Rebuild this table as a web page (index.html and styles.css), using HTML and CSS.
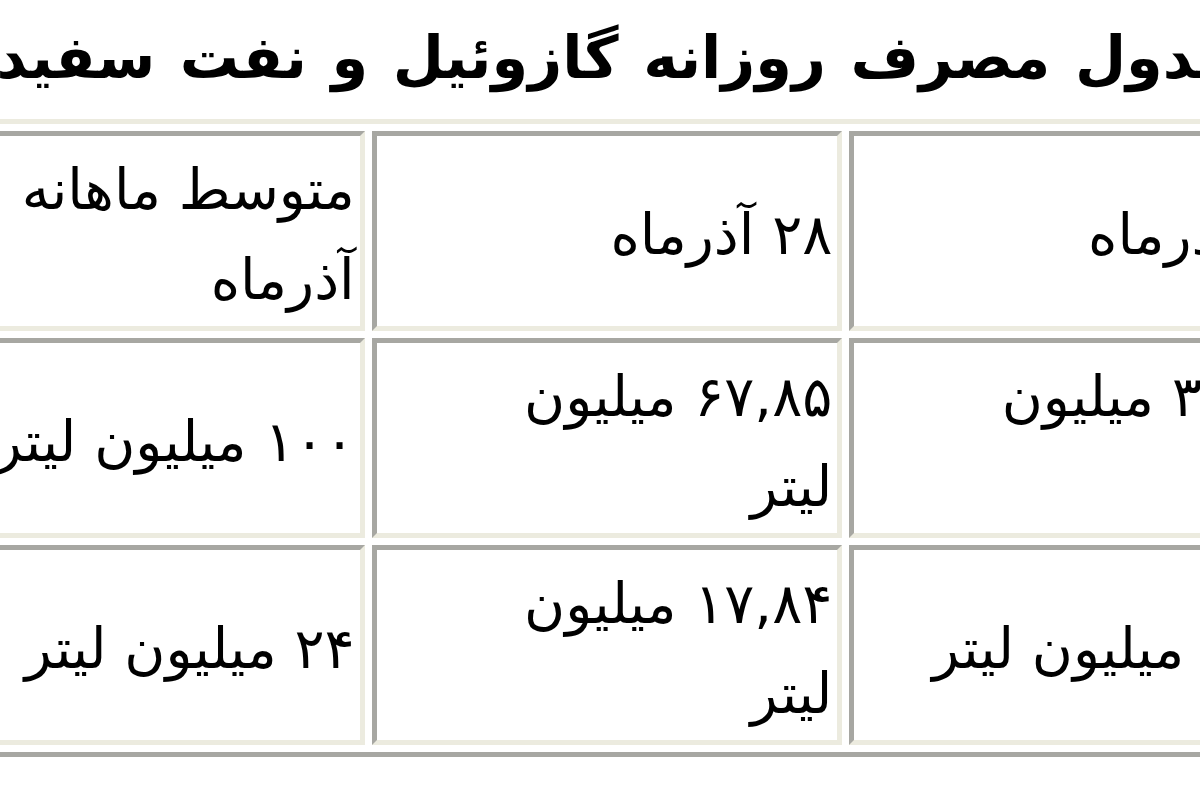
FILE: index.html
```html
<!DOCTYPE html>
<html lang="fa">
<head>
<meta charset="utf-8">
<title>جدول مصرف روزانه گازوئیل و نفت سفید</title>
<link rel="stylesheet" href="styles.css">
</head>
<body>
<div class="page">
  <table class="usage">
    <caption class="usage-title">جدول مصرف روزانه گازوئیل و نفت سفید</caption>
    <tr>
      <td class="c1">۲۷ آذرماه</td>
      <td class="c2">۲۸ آذرماه</td>
      <td class="c3">متوسط ماهانه<br>آذرماه</td>
    </tr>
    <tr>
      <td class="c1">۳۶,۷۵ میلیون<br>لیتر</td>
      <td class="c2">۶۷,۸۵ میلیون<br>لیتر</td>
      <td class="c3">۱۰۰ میلیون لیتر</td>
    </tr>
    <tr>
      <td class="c1">۱۱,۵ میلیون لیتر</td>
      <td class="c2">۱۷,۸۴ میلیون<br>لیتر</td>
      <td class="c3">۲۴ میلیون لیتر</td>
    </tr>
  </table>
</div>
</body>
</html>
```

FILE: styles.css
```css
html, body {
  margin: 0;
  padding: 0;
  background: #ffffff;
  overflow: hidden;
}

.page {
  direction: rtl;
  width: 1428px;
  margin-left: -96px;
  font-family: "DejaVu Sans", sans-serif;
  color: #000;
}

.usage {
  width: 1428px;
  table-layout: fixed;
  border-collapse: separate;
  border-spacing: 7px;
  border-style: solid;
  border-width: 5px;
  border-color: #ecebdf #a7a7a2 #a7a7a2 #ecebdf;
}

.usage-title {
  font-size: 59px;
  font-weight: bold;
  line-height: 115px;
  padding-bottom: 4px;
  text-align: center;
  word-spacing: 4px;
}

.usage td {
  box-sizing: border-box;
  height: 200px;
  padding: 8px 5px 0;
  border-style: solid;
  border-width: 5px;
  border-color: #a7a7a2 #ecebdf #ecebdf #a7a7a2;
  font-size: 56px;
  line-height: 90px;
  text-align: right;
  vertical-align: middle;
  white-space: nowrap;
  overflow: hidden;
}

.usage .c1 { width: 470px; }
.usage .c2 { width: 470px; }
.usage .c3 { width: 448px; }
```
